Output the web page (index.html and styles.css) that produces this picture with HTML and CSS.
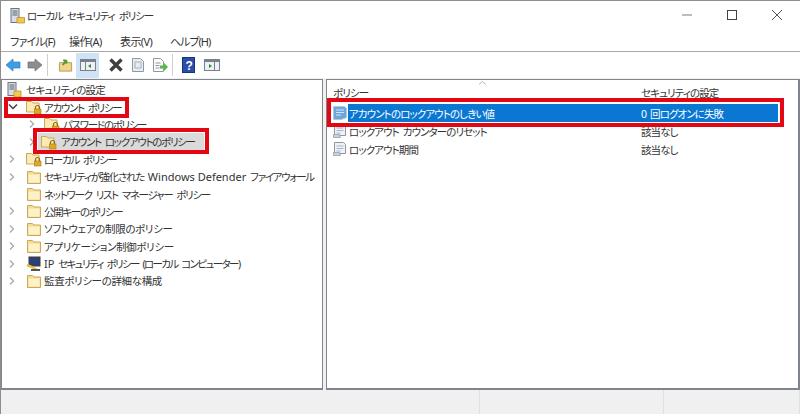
FILE: index.html
```html
<!DOCTYPE html>
<html lang="ja">
<head>
<meta charset="utf-8">
<title>ローカル セキュリティ ポリシー</title>
<link rel="stylesheet" href="styles.css">
</head>
<body>
<svg class="defs" width="0" height="0" aria-hidden="true">
  <defs>
    <symbol id="folder" viewBox="0 0 16 16">
      <path d="M1.500 2.500h5l1.500 1.500h6.500v10.500h-13z" fill="#f8dc8e" stroke="#c9a85a"/>
      <path d="M2.500 5.500h11v8h-11z" fill="#fdf1c8"/>
    </symbol>
    <symbol id="lock" viewBox="0 0 16 16">
      <path d="M.5 2.500h5l1.500 1.500h6v9h-12.500z" fill="#fbeab4" stroke="#c9a85a"/>
      <path d="M9.500 10v-1.500a2 2 0 0 1 4 0v1.500" fill="none" stroke="#8a6a1c" stroke-width="1.200"/>
      <rect x="8.500" y="10" width="6.500" height="5" fill="#e0a925" stroke="#a9781a" stroke-width=".6"/>
    </symbol>
    <symbol id="policy" viewBox="0 0 16 16">
      <path d="M2.500 1.500h9l2 2v9h-11z" fill="#eef1f5" stroke="#8d97a5"/>
      <path d="M4.500 5h7M4.500 7.500h7M4.500 10h4" stroke="#a9b6c6"/>
      <path d="M1.500 11.500h6l1 3h-7z" fill="#c9d3df" stroke="#8d97a5" stroke-width=".7"/>
    </symbol>
    <symbol id="policy-sel" viewBox="0 0 16 16">
      <path d="M1.500 1.500h11l2 2v9l-5 2h-8z" fill="#6ea6d8" stroke="#a8cdec"/>
      <path d="M4 5h8M4 7.500h8M4 10h5" stroke="#cfe4f6"/>
    </symbol>
    <symbol id="chev-r" viewBox="0 0 8 10"><path d="M2 1.500l3.500 3.500-3.500 3.500" fill="none" stroke="#a6a6a6" stroke-width="1.200"/></symbol>
    <symbol id="chev-d" viewBox="0 0 10 8"><path d="M1 1.500l4 4 4-4" fill="none" stroke="#404040" stroke-width="1.500"/></symbol>
  </defs>
</svg>

<div class="window">
  <header class="titlebar">
    <div class="title">
      <svg class="ico16" viewBox="0 0 16 16"><rect x="1" y="0.500" width="8" height="14" fill="#d8dde3" stroke="#6c7480"/><path d="M2.500 3h5M2.500 5h5M2.500 7h5" stroke="#5a626e"/><path d="M7 9.500h7.500v5.500h-7.500z" fill="#f2c94c" stroke="#b48a22" stroke-width=".7"/></svg>
      <span>ローカル セキュリティ ポリシー</span>
    </div>
    <div class="winbtns">
      <svg class="winbtn" viewBox="0 0 12 12"><path d="M1 6h10" stroke="#9a9a9a" stroke-width="1.300"/></svg>
      <svg class="winbtn" viewBox="0 0 12 12"><rect x="1.500" y="1.500" width="9" height="9" fill="none" stroke="#444"/></svg>
      <svg class="winbtn" viewBox="0 0 12 12"><path d="M1 1l10 10M11 1l-10 10" stroke="#555"/></svg>
    </div>
  </header>

  <nav class="menubar">
    <span class="m1">ファイル(F)</span><span class="m2">操作(A)</span><span class="m3">表示(V)</span><span class="m4">ヘルプ(H)</span>
  </nav>

  <div class="toolbar">
    <svg class="tool" viewBox="0 0 16 14"><path d="M8 1v3h7v6h-7v3l-7-6z" fill="#3d9fe3" stroke="#2f7fc0" stroke-width=".7"/></svg>
    <svg class="tool t-fwd" viewBox="0 0 16 14"><path d="M8 1v3h-7v6h7v3l7-6z" fill="#8d8d8d" stroke="#6f6f6f" stroke-width=".7"/></svg>
    <i class="tsep"></i>
    <svg class="tool up" viewBox="0 0 16 16"><path d="M1.500 5.500h13v9h-13z" fill="#f3d58a" stroke="#b8985a"/><path d="M5 8l4-5M9 3h-3.500M9 3v3.500" stroke="#4e9a2e" stroke-width="2" fill="none"/></svg>
    <span class="tool-on"><svg class="tool pane" viewBox="0 0 16 14"><rect x=".5" y="1.500" width="15" height="11" fill="#eef1f4" stroke="#77808c"/><path d="M.5 1.500h15v2.500h-15z" fill="#77808c"/><path d="M5.500 4v8.500" stroke="#77808c"/><path d="M11 6v4l-3-2z" fill="#2c8c3e"/></svg></span>
    <svg class="tool cross" viewBox="0 0 16 16"><path d="M2.500 2.500l11 11M13.500 2.500l-11 11" stroke="#3f3f3f" stroke-width="3.400"/></svg>
    <svg class="tool doc" viewBox="0 0 16 16"><path d="M2.500 1.500h8l3 3v10h-11z" fill="#e8edf2" stroke="#8e98a4"/><rect x="5" y="5" width="6" height="6" fill="none" stroke="#a6b0bc"/></svg>
    <svg class="tool doc" viewBox="0 0 16 16"><path d="M1.500 1.500h7l3 3v10h-10z" fill="#fbfbfb" stroke="#8e98a4"/><path d="M3.500 6h5M3.500 8.500h4M3.500 11h4" stroke="#8e98a4"/><path d="M8 8.500h4v-2.500l4 4-4 4v-2.500h-4z" fill="#57b947"/></svg>
    <i class="tsep tsep2"></i>
    <svg class="tool help" viewBox="0 0 13 16"><rect x=".5" y=".5" width="12" height="15" fill="#2b4ea8" stroke="#1b3478"/><text x="6.500" y="12.500" text-anchor="middle" class="helpq">?</text></svg>
    <svg class="tool list" viewBox="0 0 16 14"><rect x=".5" y="1.500" width="15" height="11" fill="#eef1f4" stroke="#77808c"/><path d="M.5 1.500h15v2.500h-15z" fill="#77808c"/><path d="M10.500 4v8.500" stroke="#77808c"/><path d="M5 6v4l3-2z" fill="#2c8c3e"/></svg>
  </div>

  <main class="panes">
    <section class="pane-box tree">
      <div class="row l0 mid"><svg class="ico16" viewBox="0 0 16 16"><rect x="2" y="0.500" width="8" height="13" fill="#d8dde3" stroke="#6c7480"/><path d="M3.500 3h5M3.500 5h5M3.500 7h5" stroke="#5a626e"/><path d="M8 9h7v6h-7z" fill="#f2c94c" stroke="#b48a22" stroke-width=".7"/></svg><span>セキュリティの設定</span></div>
      <div class="row l1"><i class="mark mark-a"></i><svg class="chev down"><use href="#chev-d"/></svg><svg class="ico16"><use href="#lock"/></svg><span>アカウント ポリシー</span></div>
      <div class="row l2"><svg class="chev"><use href="#chev-r"/></svg><svg class="ico16"><use href="#lock"/></svg><span>パスワードのポリシー</span></div>
      <div class="row l2"><i class="mark mark-b"></i><svg class="chev"><use href="#chev-r"/></svg><span class="grey"><svg class="ico16"><use href="#lock"/></svg><span>アカウント ロックアウトのポリシー</span></span></div>
      <div class="row l1"><svg class="chev"><use href="#chev-r"/></svg><svg class="ico16"><use href="#lock"/></svg><span>ローカル ポリシー</span></div>
      <div class="row l1"><svg class="chev"><use href="#chev-r"/></svg><svg class="ico16"><use href="#folder"/></svg><span>セキュリティが強化された <span class="latin">Windows Defender</span> ファイアウォール</span></div>
      <div class="row l1"><span class="chev"></span><svg class="ico16"><use href="#folder"/></svg><span>ネットワーク リスト マネージャー ポリシー</span></div>
      <div class="row l1"><svg class="chev"><use href="#chev-r"/></svg><svg class="ico16"><use href="#folder"/></svg><span>公開キーのポリシー</span></div>
      <div class="row l1 loose"><svg class="chev"><use href="#chev-r"/></svg><svg class="ico16"><use href="#folder"/></svg><span>ソフトウェアの制限のポリシー</span></div>
      <div class="row l1 loose"><svg class="chev"><use href="#chev-r"/></svg><svg class="ico16"><use href="#folder"/></svg><span>アプリケーション制御ポリシー</span></div>
      <div class="row l1 tight"><svg class="chev"><use href="#chev-r"/></svg><svg class="ico16" viewBox="0 0 16 16"><rect x="3" y="1" width="11" height="9" fill="#2d3f78" stroke="#3b3b3b"/><path d="M1 9l5 2 5 3" stroke="#e2c33b" stroke-width="2.500" fill="none"/><path d="M5 13h9v2h-9z" fill="#555"/></svg><span><span class="latin">IP</span> セキュリティ ポリシー (ローカル コンピューター)</span></div>
      <div class="row l1 loose"><svg class="chev"><use href="#chev-r"/></svg><svg class="ico16"><use href="#folder"/></svg><span>監査ポリシーの詳細な構成</span></div>
    </section>

    <section class="pane-box list-pane">
      <div class="list-head">
        <svg class="sort" viewBox="0 0 8 4"><path d="M.5 3.500l3.500-3 3.500 3" fill="none" stroke="#b5b5b5"/></svg>
        <span class="col-a">ポリシー</span><span class="col-b">セキュリティの設定</span>
      </div>
      <div class="list-row">
        <i class="mark mark-c"></i>
        <svg class="ico16"><use href="#policy-sel"/></svg>
        <div class="cells sel"><span class="col-a">アカウントのロックアウトのしきい値</span><span class="col-b">0 回ログオンに失敗</span></div>
      </div>
      <div class="list-row">
        <svg class="ico16"><use href="#policy"/></svg>
        <div class="cells"><span class="col-a">ロックアウト カウンターのリセット</span><span class="col-b">該当なし</span></div>
      </div>
      <div class="list-row">
        <svg class="ico16"><use href="#policy"/></svg>
        <div class="cells"><span class="col-a">ロックアウト期間</span><span class="col-b">該当なし</span></div>
      </div>
    </section>
  </main>

  <footer class="statusbar"><i class="st st-a"></i><i class="st st-b"></i><i class="st st-c"></i></footer>
</div>
</body>
</html>
```

FILE: styles.css
```css
* { box-sizing: border-box; }
html, body { margin: 0; padding: 0; }
body {
  width: 800px;
  height: 414px;
  overflow: hidden;
  background: #fff;
  color: #333;
  font-family: "Noto Sans", "Noto Sans CJK JP", sans-serif;
  font-size: 10.500px;
  letter-spacing: -1.300px;
  word-spacing: 2.500px;
  font-feature-settings: "palt";
}
.latin { font-size: 11px; letter-spacing: 0; word-spacing: 0; }
.defs { position: absolute; }
i { display: block; font-style: normal; }
svg { display: block; flex: none; }
.ico16 { width: 16px; height: 16px; }

.window {
  display: flex;
  flex-direction: column;
  height: 414px;
  border-left: 1px solid #8d8d8d;
  border-top: 1px solid #8d8d8d;
}

.titlebar {
  height: 29px;
  display: flex;
  align-items: center;
  justify-content: space-between;
  padding: 0 17px 0 9px;
}
.title { display: flex; align-items: center; gap: 1px; font-size: 10.500px; letter-spacing: -1.100px; word-spacing: 2.500px; }
.winbtns { display: flex; gap: 33px; margin-top: -1px; }
.winbtn { width: 12px; height: 12px; }

.menubar {
  height: 22px;
  display: flex;
  align-items: center;
  padding: 0 0 0 9px;
  border-bottom: 1px solid #a9a9a9;
  font-size: 11px;
  letter-spacing: -.600px;
}
.menubar span { flex: none; }
.m1 { width: 59px; letter-spacing: -.800px; }
.m2 { width: 51px; }
.m3 { width: 50px; }
.m4 { letter-spacing: -1px; }

.toolbar {
  height: 26px;
  display: flex;
  align-items: center;
  padding-left: 4px;
}
.tool { width: 16px; height: 14px; }
.t-fwd { margin-left: 6px; }
.tsep { width: 1px; height: 22px; background: #cfcfcf; margin-left: 4px; }
.up { width: 15px; height: 16px; margin-left: 10px; }
.tool-on {
  width: 23px;
  height: 25px;
  background: #cfe3f5;
  display: flex;
  align-items: center;
  justify-content: center;
  margin-left: 3px;
}
.cross, .doc { width: 16px; height: 16px; margin-left: 6px; }
.cross { margin-left: 9px; }
.help { width: 13px; height: 16px; margin-left: 9px; }
.helpq { font: bold 12px "Liberation Sans", sans-serif; fill: #fff; }
.list { margin-left: 9px; }

.panes {
  height: 312px;
  padding: 1px 0 0;
  background: #f0f0f0;
  display: flex;
  gap: 3px;
}
.pane-box {
  background: #fff;
  border: 1px solid #7e858d;
  border-bottom-width: 2px;
  height: 311px;
}
.tree { width: 322px; padding-top: 1px; }
.list-pane { flex: 1; border-right-width: 2px; letter-spacing: -.900px; word-spacing: 2px; }

.row {
  position: relative;
  height: 17.400px;
  display: flex;
  align-items: center;
  white-space: nowrap;
}
.mid { letter-spacing: -.700px; }
.loose { letter-spacing: -.350px; }
.tight { letter-spacing: -1.600px; }
.chev { width: 8px; height: 10px; margin-right: 5px; }
.chev.down { width: 10px; height: 8px; margin-right: 3px; }
.l0 { padding-left: 4px; gap: 4px; }
.l1 { padding-left: 6px; }
.l1 .ico16 { margin-right: 2px; margin-left: 5px; }
.l2 { padding-left: 26px; }
.l2 .ico16 { margin-right: 3px; margin-left: 3px; }
.grey {
  display: flex;
  align-items: center;
  gap: 1px;
  width: 166px;
  height: 18px;
  margin-left: -3px;
  background: #dadada;
}

.mark {
  position: absolute;
  border: 4px solid #e30613;
  z-index: 2;
  pointer-events: none;
}
.mark-a { left: 2px; top: -1px; width: 125px; height: 21px; }
.mark-b { left: 31px; top: -5px; width: 176px; height: 26px; }
.mark-c { left: 0; top: -6px; width: 457px; height: 29px; }

.list-head {
  position: relative;
  height: 24px;
  display: flex;
  align-items: center;
  padding: 0 0 0 6px;
}
.sort { position: absolute; left: 151px; top: 1px; width: 9px; height: 4px; }
.col-a { width: 292px; flex: none; }
.col-b { flex: none; }
.list-head .col-a { width: 308px; }
.list-row {
  position: relative;
  height: 18px;
  display: flex;
  align-items: center;
  padding-left: 5px;
  white-space: nowrap;
}
.cells { display: flex; align-items: center; height: 18px; width: 430px; padding-left: 1px; }
.sel { background: #0a78d2; color: #fff; }
.statusbar {
  flex: 1;
  background: #f0f0f0;
  display: flex;
}
.st { height: 100%; border-right: 1px solid #e0e0e0; }
.st-a { width: 479px; }
.st-b { width: 184px; }
.st-c { width: 136px; }
```
